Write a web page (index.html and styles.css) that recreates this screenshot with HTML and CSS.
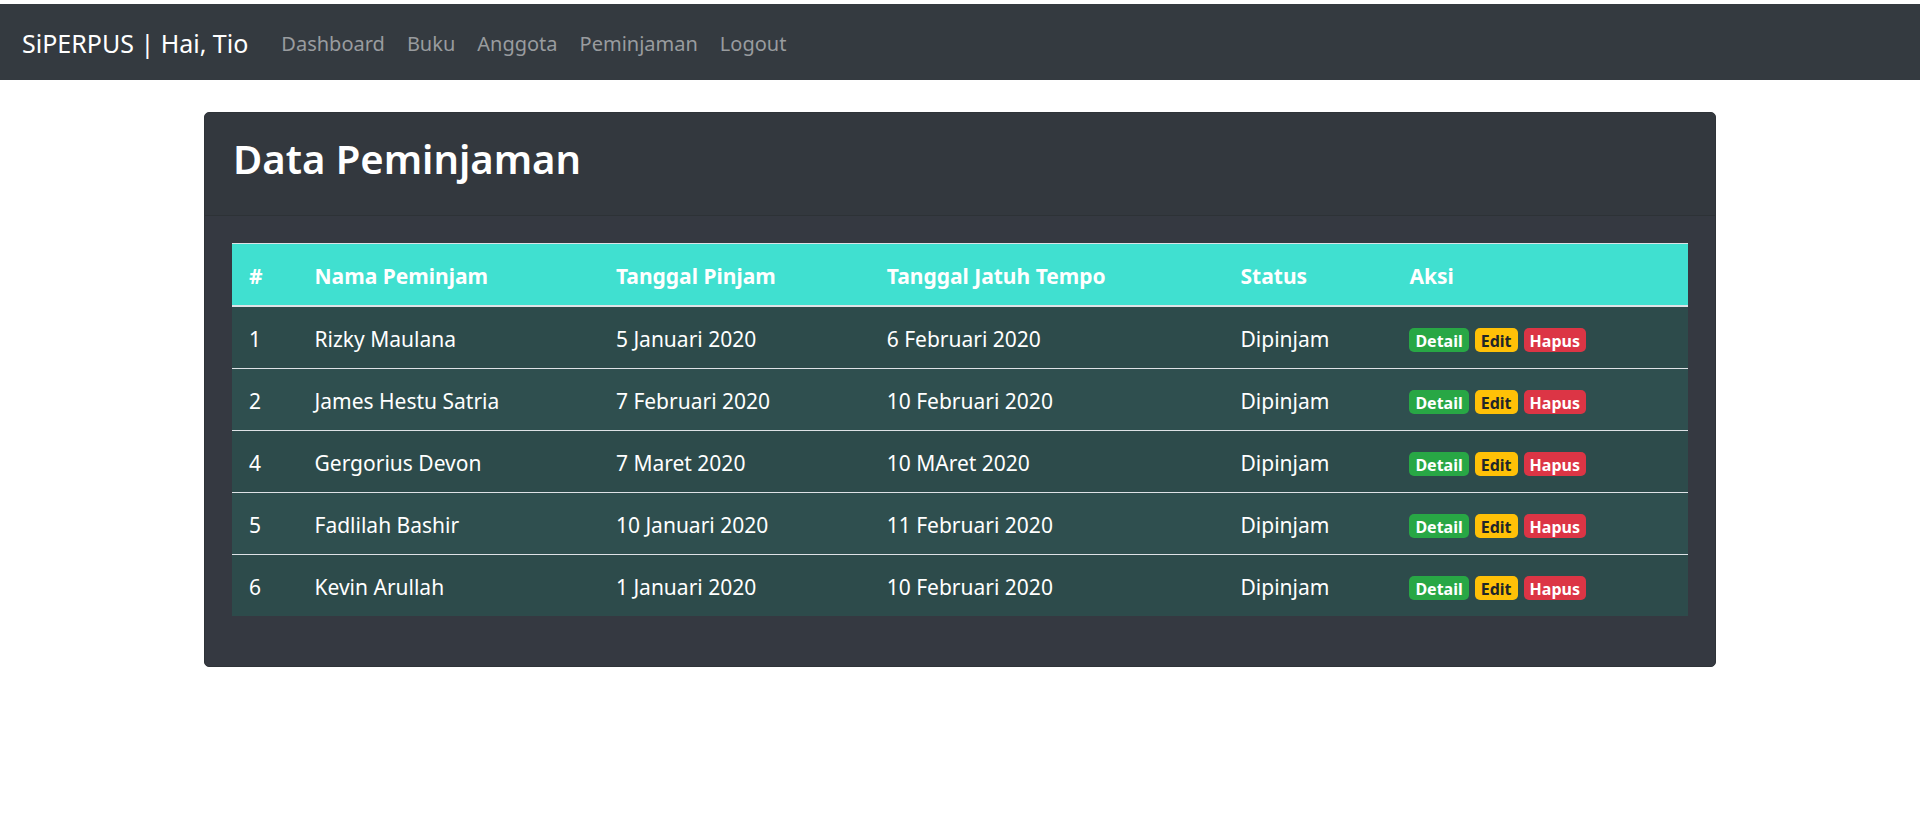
FILE: index.html
```html
<!DOCTYPE html>
<html lang="id">
<head>
<meta charset="utf-8">
<meta name="viewport" content="width=device-width, initial-scale=1">
<title>Data Peminjaman</title>
<link rel="stylesheet" href="styles.css">
</head>
<body>
<nav class="navbar">
  <a class="brand" href="#">SiPERPUS | Hai, Tio</a>
  <div class="nav-links">
    <a href="#">Dashboard</a>
    <a href="#">Buku</a>
    <a href="#">Anggota</a>
    <a href="#">Peminjaman</a>
    <a href="#">Logout</a>
  </div>
</nav>
<main class="container">
  <section class="card">
    <header class="card-header"><h2>Data Peminjaman</h2></header>
    <div class="card-body">
      <table class="table">
        <colgroup>
          <col class="col-no"><col class="col-name"><col class="col-start"><col class="col-due"><col class="col-status"><col class="col-action">
        </colgroup>
        <thead>
          <tr><th scope="col">#</th><th scope="col">Nama Peminjam</th><th scope="col">Tanggal Pinjam</th><th scope="col">Tanggal Jatuh Tempo</th><th scope="col">Status</th><th scope="col">Aksi</th></tr>
        </thead>
        <tbody>
          <tr><td>1</td><td>Rizky Maulana</td><td>5 Januari 2020</td><td>6 Februari 2020</td><td>Dipinjam</td><td><div class="actions"><a class="badge success" href="#">Detail</a><a class="badge warning" href="#">Edit</a><a class="badge danger" href="#">Hapus</a></div></td></tr>
          <tr><td>2</td><td>James Hestu Satria</td><td>7 Februari 2020</td><td>10 Februari 2020</td><td>Dipinjam</td><td><div class="actions"><a class="badge success" href="#">Detail</a><a class="badge warning" href="#">Edit</a><a class="badge danger" href="#">Hapus</a></div></td></tr>
          <tr><td>4</td><td>Gergorius Devon</td><td>7 Maret 2020</td><td>10 MAret 2020</td><td>Dipinjam</td><td><div class="actions"><a class="badge success" href="#">Detail</a><a class="badge warning" href="#">Edit</a><a class="badge danger" href="#">Hapus</a></div></td></tr>
          <tr><td>5</td><td>Fadlilah Bashir</td><td>10 Januari 2020</td><td>11 Februari 2020</td><td>Dipinjam</td><td><div class="actions"><a class="badge success" href="#">Detail</a><a class="badge warning" href="#">Edit</a><a class="badge danger" href="#">Hapus</a></div></td></tr>
          <tr><td>6</td><td>Kevin Arullah</td><td>1 Januari 2020</td><td>10 Februari 2020</td><td>Dipinjam</td><td><div class="actions"><a class="badge success" href="#">Detail</a><a class="badge warning" href="#">Edit</a><a class="badge danger" href="#">Hapus</a></div></td></tr>
        </tbody>
      </table>
    </div>
  </section>
</main>
</body>
</html>
```
FILE: styles.css
```css
* { box-sizing: border-box; }
body {
  margin: 0;
  padding-top: 4px;
  background: #fff;
  color: #fff;
  font-family: "Segoe UI", "Noto Sans", sans-serif;
  font-size: 21px;
  line-height: 27px;
}
a { text-decoration: none; }
.navbar {
  display: flex;
  align-items: center;
  gap: 33px;
  padding: 21px 22px 19px;
  background: #343a40;
}
.brand { color: #fff; font-size: 25px; line-height: 36px; }
.nav-links { display: flex; gap: 22px; font-size: 20px; }
.nav-links a { color: #999c9f; }
.container { max-width: 1512px; margin: 32px auto; }
.card {
  border: 1px solid #2e3338;
  border-radius: 5px;
  background: #353941;
  overflow: hidden;
}
.card-header {
  padding: 17px 28px 28px;
  background: #33383e;
  border-bottom: 1px solid #2d3236;
}
.card-header h2 {
  margin: 0;
  font-size: 40px;
  font-weight: 600;
  line-height: 57px;
}
.card-body { padding: 27px; }
.table {
  width: 100%;
  margin-bottom: 23px;
  table-layout: fixed;
  border-collapse: separate;
  border-spacing: 0;
  background: #2f4f4f;
}
.table th, .table td { padding: 19px 17px 15px; text-align: left; white-space: nowrap; }
.table th {
  background: #40e0d0;
  border-top: 1px solid #dee2e6;
  border-bottom: 2px solid #dee2e6;
  font-weight: 700;
}
.table tbody tr:nth-child(odd) { background: #2d4b4b; }
.table tbody tr + tr td { border-top: 1px solid #dee2e6; }
.col-no { width: 4.5%; }
.col-name { width: 20.7%; }
.col-start { width: 18.6%; }
.col-due { width: 24.3%; }
.col-status { width: 11.6%; }
.col-action { width: 20.3%; }
.actions { display: flex; gap: 6px; padding-top: 2px; height: 27px; }
.badge {
  height: 24px;
  padding: 0 6px;
  border-radius: 5px;
  font-size: 16px;
  font-weight: 700;
  line-height: 26px;
}
.success { background: #28a745; color: #fff; }
.warning { background: #ffc107; color: #212529; }
.danger { background: #dc3545; color: #fff; }
```
